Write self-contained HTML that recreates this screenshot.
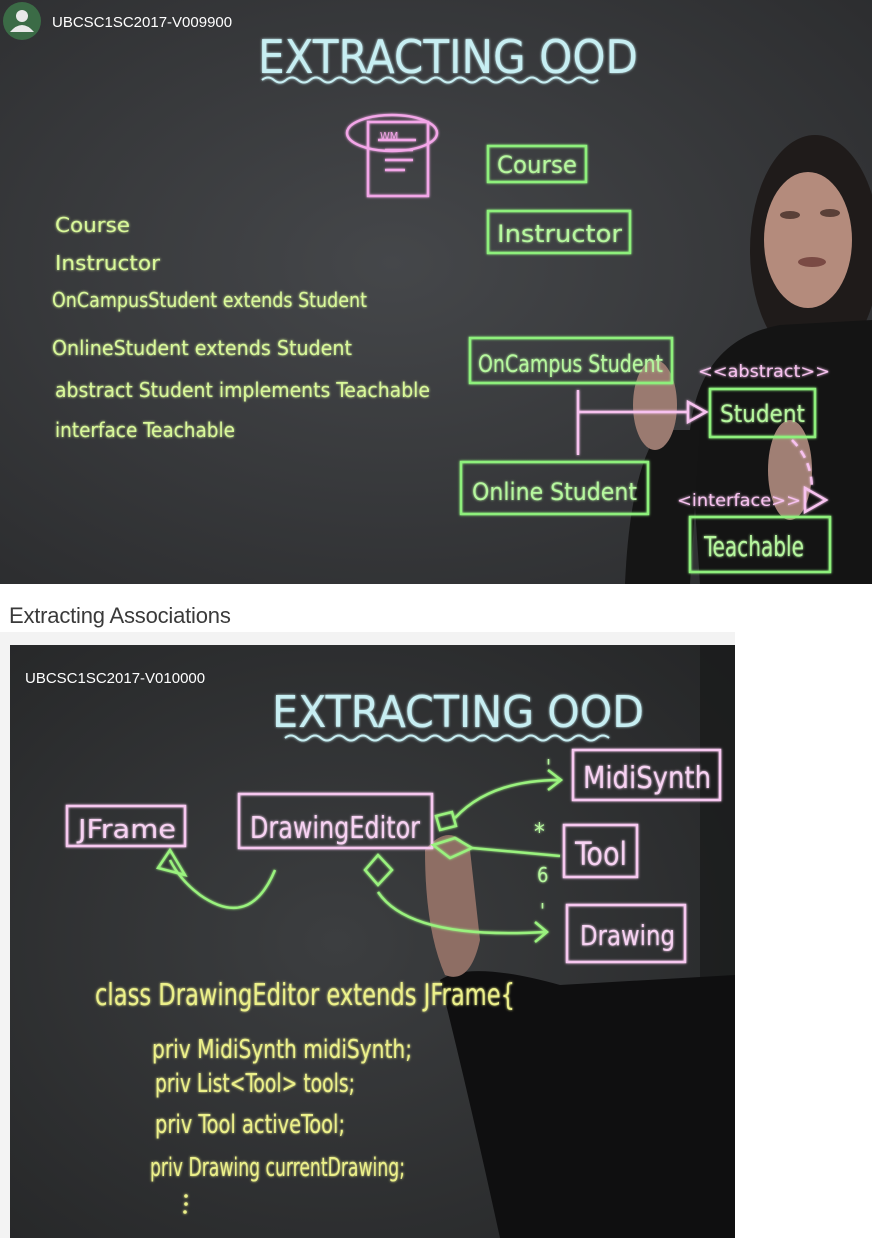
<!DOCTYPE html>
<html><head><meta charset="utf-8"><style>
html,body{margin:0;padding:0;width:872px;height:1256px;background:#fff;overflow:hidden;font-family:"Liberation Sans",sans-serif}
#v1{position:absolute;left:0;top:0}
#h{position:absolute;left:9px;top:603px;font-size:22px;color:#3a3a3a;margin:0;font-weight:normal;letter-spacing:-0.2px}
#panel{position:absolute;left:0;top:632px;width:735px;height:606px;background:#f3f3f3}
#v2{position:absolute;left:10px;top:645px}
</style></head><body>
<svg id="v1" width="872" height="584" viewBox="0 0 872 584">
<defs>
<radialGradient id="g1" cx="0.45" cy="0.45" r="0.75"><stop offset="0" stop-color="#45474a"/><stop offset="1" stop-color="#2b2c2e"/></radialGradient>
<filter id="gl"><feGaussianBlur stdDeviation="1.2" result="b"/><feMerge><feMergeNode in="b"/><feMergeNode in="SourceGraphic"/></feMerge></filter>
</defs>
<rect width="872" height="584" fill="url(#g1)"/>
<!-- person -->
<ellipse cx="815" cy="250" rx="65" ry="115" fill="#1f1b1a"/>
<ellipse cx="808" cy="240" rx="44" ry="68" fill="#b48b7c"/>
<ellipse cx="790" cy="215" rx="10" ry="4" fill="#5a4038"/><ellipse cx="830" cy="213" rx="10" ry="4" fill="#5a4038"/>
<ellipse cx="812" cy="262" rx="14" ry="5" fill="#7a4a44"/>
<path d="M700 584 L690 430 Q700 340 780 325 L872 320 L872 584 Z" fill="#141414"/>
<path d="M625 584 Q630 470 660 430 L700 430 L690 584Z" fill="#151515"/>
<ellipse cx="655" cy="405" rx="22" ry="45" fill="#9a7a70"/>
<ellipse cx="790" cy="470" rx="22" ry="50" fill="#a07f74"/>
<!-- overlay -->
<circle cx="22" cy="21" r="19" fill="#3b6b46"/>
<circle cx="22" cy="16" r="6" fill="#e8e8e8"/><path d="M10 32 Q22 18 34 32 Z" fill="#e8e8e8"/>
<text x="52" y="27" font-size="15" fill="#fff">UBCSC1SC2017-V009900</text>
<g filter="url(#gl)" font-family="DejaVu Sans Condensed, Liberation Sans, sans-serif">
<text x="258" y="73" font-size="46" fill="#c7eef2" textLength="380" lengthAdjust="spacingAndGlyphs">EXTRACTING OOD</text>
<path d="M262 80 q6 -5 12 0 t12 0 t12 0 t12 0 t12 0 t12 0 t12 0 t12 0 t12 0 t12 0 t12 0 t12 0 t12 0 t12 0 t12 0 t12 0 t12 0 t12 0 t12 0 t12 0 t12 0 t12 0 t12 0 t12 0 t12 0 t12 0 t12 0 t12 0" stroke="#c7eef2" stroke-width="2" fill="none"/>
<g stroke="#f3a6e8" stroke-width="2.5" fill="none">
<ellipse cx="392" cy="133" rx="45" ry="18"/>
<rect x="368" y="122" width="60" height="74"/>
<path d="M378 140h38M385 150h28M385 160h28M385 170h20"/>
</g>
<text x="380" y="140" font-size="11" fill="#f3a6e8">WM</text>
<g fill="#d9f89a" font-size="20">
<text x="55" y="232" textLength="75" lengthAdjust="spacingAndGlyphs">Course</text>
<text x="55" y="270" textLength="105" lengthAdjust="spacingAndGlyphs">Instructor</text>
<text x="52" y="307" textLength="315" lengthAdjust="spacingAndGlyphs">OnCampusStudent extends Student</text>
<text x="52" y="355" textLength="300" lengthAdjust="spacingAndGlyphs">OnlineStudent extends Student</text>
<text x="55" y="397" textLength="375" lengthAdjust="spacingAndGlyphs">abstract Student implements Teachable</text>
<text x="55" y="437" textLength="180" lengthAdjust="spacingAndGlyphs">interface Teachable</text>
</g>
<g stroke="#8ef07c" stroke-width="2.5" fill="none">
<rect x="488" y="146" width="98" height="36"/>
<rect x="488" y="211" width="142" height="42"/>
<rect x="470" y="338" width="202" height="45"/>
<rect x="461" y="462" width="187" height="52"/>
<rect x="710" y="389" width="105" height="48"/>
<rect x="690" y="517" width="140" height="55"/>
</g>
<g fill="#b6f79e" font-size="24">
<text x="497" y="173" textLength="80" lengthAdjust="spacingAndGlyphs">Course</text>
<text x="497" y="242" textLength="125" lengthAdjust="spacingAndGlyphs">Instructor</text>
<text x="478" y="372" textLength="185" lengthAdjust="spacingAndGlyphs">OnCampus Student</text>
<text x="472" y="500" textLength="165" lengthAdjust="spacingAndGlyphs">Online Student</text>
<text x="720" y="422" textLength="85" lengthAdjust="spacingAndGlyphs">Student</text>
<text x="704" y="556" font-size="28" textLength="100" lengthAdjust="spacingAndGlyphs">Teachable</text>
</g>
<g stroke="#f7c2ef" stroke-width="2.5" fill="none">
<path d="M578 390V455M578 412H688"/>
<path d="M688 402L706 412L688 422Z"/>
<path d="M792 440Q812 460 812 490" stroke-dasharray="8 6"/>
<path d="M805 488L826 500L805 512Z"/>
</g>
<g fill="#f7c2ef" font-size="17">
<text x="698" y="377" textLength="132" lengthAdjust="spacingAndGlyphs">&lt;&lt;abstract&gt;&gt;</text>
<text x="677" y="506" textLength="124" lengthAdjust="spacingAndGlyphs">&lt;interface&gt;&gt;</text>
</g>
</g>
</svg>
<h2 id="h">Extracting Associations</h2>
<div id="panel"></div>
<svg id="v2" width="725" height="593" viewBox="10 645 725 593">
<defs>
<radialGradient id="g2" cx="0.45" cy="0.5" r="0.8"><stop offset="0" stop-color="#3c3e40"/><stop offset="1" stop-color="#232425"/></radialGradient>
</defs>
<rect x="10" y="645" width="725" height="593" fill="url(#g2)"/>
<rect x="700" y="645" width="35" height="593" fill="#18191a" opacity="0.7"/>
<path d="M440 980 Q470 960 560 985 L735 975 L735 1238 L500 1238 Q470 1100 440 980Z" fill="#0f0f10"/>
<path d="M425 850 Q450 820 470 850 L480 940 Q470 985 445 975 Q425 930 425 850Z" fill="#8e6e64"/>
<text x="25" y="683" font-size="15" fill="#fff">UBCSC1SC2017-V010000</text>
<g filter="url(#gl)" font-family="DejaVu Sans Condensed, Liberation Sans, sans-serif">
<text x="272" y="727" font-size="44" fill="#c7eef2" textLength="372" lengthAdjust="spacingAndGlyphs">EXTRACTING OOD</text>
<path d="M285 738 q6 -5 12 0 t12 0 t12 0 t12 0 t12 0 t12 0 t12 0 t12 0 t12 0 t12 0 t12 0 t12 0 t12 0 t12 0 t12 0 t12 0 t12 0 t12 0 t12 0 t12 0 t12 0 t12 0 t12 0 t12 0 t12 0 t12 0 t12 0" stroke="#c7eef2" stroke-width="2" fill="none"/>
<g stroke="#f7c8f0" stroke-width="2.5" fill="none">
<rect x="67" y="806" width="118" height="40"/>
<rect x="239" y="794" width="193" height="54"/>
<rect x="573" y="750" width="147" height="50"/>
<rect x="564" y="825" width="73" height="52"/>
<rect x="567" y="905" width="118" height="57"/>
</g>
<g fill="#f7d2f2" font-size="26">
<text x="78" y="838" textLength="98" lengthAdjust="spacingAndGlyphs">JFrame</text>
<text x="250" y="838" font-size="30" textLength="170" lengthAdjust="spacingAndGlyphs">DrawingEditor</text>
<text x="583" y="788" font-size="30" textLength="128" lengthAdjust="spacingAndGlyphs">MidiSynth</text>
<text x="575" y="865" font-size="32" textLength="52" lengthAdjust="spacingAndGlyphs">Tool</text>
<text x="580" y="945" font-size="28" textLength="95" lengthAdjust="spacingAndGlyphs">Drawing</text>
</g>
<g stroke="#9af27e" stroke-width="2.5" fill="none">
<path d="M275 870 Q250 930 200 895 Q180 880 170 860"/>
<path d="M158 868L170 850L185 875Z"/>
<path d="M378 855L392 870L378 885L365 870Z"/>
<path d="M378 892Q410 940 545 932M535 922L547 932L535 942"/>
<path d="M436 816L452 812L456 826L440 830Z"/>
<path d="M455 818Q490 780 560 780M548 770L561 780L548 790"/>
<path d="M433 845L455 838L472 848L450 858Z"/>
<path d="M472 848L560 856"/>
</g>
<g fill="#b6f79e" font-size="20">
<text x="546" y="774">'</text><text x="534" y="840" font-size="24">*</text><text x="537" y="882">6</text><text x="540" y="918">'</text>
</g>
<g fill="#ecf08a" font-size="26">
<text x="95" y="1005" font-size="30" textLength="420" lengthAdjust="spacingAndGlyphs">class DrawingEditor extends JFrame{</text>
<text x="152" y="1058" textLength="260" lengthAdjust="spacingAndGlyphs">priv MidiSynth midiSynth;</text>
<text x="155" y="1092" textLength="200" lengthAdjust="spacingAndGlyphs">priv List&lt;Tool&gt; tools;</text>
<text x="155" y="1133" textLength="190" lengthAdjust="spacingAndGlyphs">priv Tool activeTool;</text>
<text x="150" y="1176" textLength="255" lengthAdjust="spacingAndGlyphs">priv Drawing currentDrawing;</text>
<circle cx="186" cy="1196" r="1.8"/><circle cx="186" cy="1204" r="1.8"/><circle cx="185" cy="1212" r="1.8"/>
</g>
</g>
</svg>
</body></html>
